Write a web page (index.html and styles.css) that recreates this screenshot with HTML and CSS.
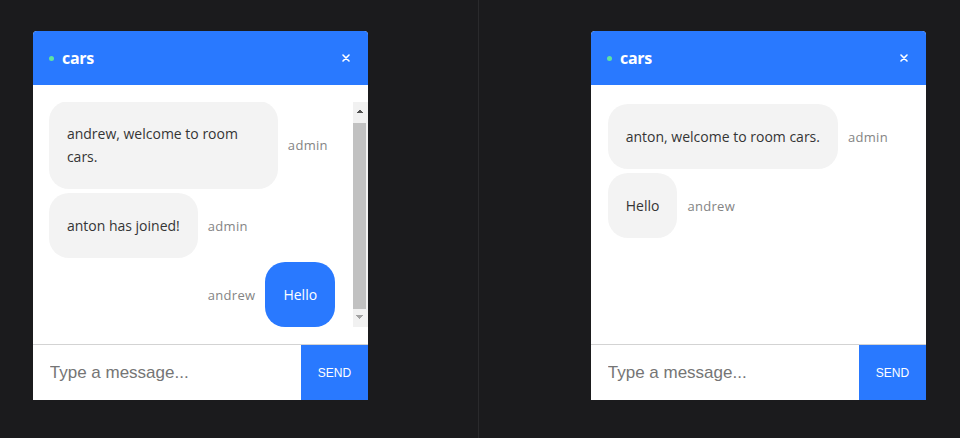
FILE: index.html
```html
<!DOCTYPE html>
<html lang="en">
<head>
<meta charset="utf-8">
<title>Chat</title>
<link rel="stylesheet" href="styles.css">
</head>
<body>
<div class="page">
  <section class="half half-left">
    <div class="chat">
      <header class="info-bar">
        <div class="room"><span class="online-dot"></span><h3 class="room-name">cars</h3></div>
        <button class="close" aria-label="Close">
          <svg width="8" height="8" viewBox="0 0 8 8"><path d="M1 1L7 7M7 1L1 7" stroke="#fff" stroke-width="1.6" stroke-linecap="round"/></svg>
        </button>
      </header>
      <div class="messages-wrap">
        <div class="messages messages-bottom">
          <div class="list">
            <div class="row">
              <div class="bubble bubble-grey"><p class="text">andrew, welcome to room cars.</p></div>
              <span class="sender sender-after">admin</span>
            </div>
            <div class="row">
              <div class="bubble bubble-grey"><p class="text">anton has joined!</p></div>
              <span class="sender sender-after">admin</span>
            </div>
            <div class="row row-mine">
              <span class="sender sender-before">andrew</span>
              <div class="bubble bubble-blue"><p class="text">Hello</p></div>
            </div>
          </div>
        </div>
        <div class="scrollbar" aria-hidden="true">
          <div class="sb-btn sb-up"></div>
          <div class="sb-track"><div class="sb-thumb"></div></div>
          <div class="sb-btn sb-down"></div>
        </div>
      </div>
      <form class="form">
        <input class="input" type="text" placeholder="Type a message...">
        <button class="send" type="button">Send</button>
      </form>
    </div>
  </section>
  <div class="divider"></div>
  <section class="half half-right">
    <div class="chat">
      <header class="info-bar">
        <div class="room"><span class="online-dot"></span><h3 class="room-name">cars</h3></div>
        <button class="close" aria-label="Close">
          <svg width="8" height="8" viewBox="0 0 8 8"><path d="M1 1L7 7M7 1L1 7" stroke="#fff" stroke-width="1.6" stroke-linecap="round"/></svg>
        </button>
      </header>
      <div class="messages-wrap">
        <div class="messages">
          <div class="list">
            <div class="row">
              <div class="bubble bubble-grey"><p class="text">anton, welcome to room cars.</p></div>
              <span class="sender sender-after">admin</span>
            </div>
            <div class="row">
              <div class="bubble bubble-grey"><p class="text">Hello</p></div>
              <span class="sender sender-after">andrew</span>
            </div>
          </div>
        </div>
      </div>
      <form class="form">
        <input class="input" type="text" placeholder="Type a message...">
        <button class="send" type="button">Send</button>
      </form>
    </div>
  </section>
</div>
</body>
</html>
```
FILE: styles.css
```css
html, body {
  margin: 0;
  padding: 0;
  background: #1b1b1d;
}
.page {
  display: flex;
  width: 960px;
  height: 438px;
  overflow: hidden;
}
.half {
  display: flex;
  align-items: flex-start;
  padding-top: 31px;
  box-sizing: border-box;
}
.half-left {
  width: 478px;
  padding-left: 33px;
}
.half-right {
  width: 481px;
  padding-left: 112px;
}
.divider {
  width: 1px;
  height: 438px;
  background: #2a2a2c;
}
.chat {
  width: 335px;
  height: 369px;
  display: flex;
  flex-direction: column;
  background: #fff;
  border-radius: 4px 4px 0 0;
  overflow: hidden;
}
.info-bar {
  height: 54px;
  flex: none;
  display: flex;
  align-items: center;
  justify-content: space-between;
  background: #2979ff;
  padding: 0 18px 0 16px;
}
.room {
  display: flex;
  align-items: center;
  gap: 8px;
}
.online-dot {
  width: 5px;
  height: 5px;
  border-radius: 50%;
  background: #5fe3a1;
  margin-top: 1px;
}
.room-name {
  margin: 0;
  font-family: "Open Sans", sans-serif;
  font-weight: 700;
  font-size: 16px;
  letter-spacing: -0.3px;
  color: #fff;
  line-height: 20px;
}
.close {
  border: none;
  background: none;
  padding: 0;
  width: 9px;
  height: 9px;
  display: flex;
  align-items: center;
  justify-content: center;
}
.messages-wrap {
  flex: 1;
  min-height: 0;
  padding: 17px 0;
  display: flex;
}
.messages {
  flex: 1;
  min-width: 0;
  overflow: hidden;
  display: flex;
  flex-direction: column;
}
.messages-bottom {
  flex-direction: column-reverse;
}
.scrollbar {
  flex: none;
  width: 15px;
  margin-left: 2px;
  display: flex;
  flex-direction: column;
  background: #f1f1f1;
}
.sb-btn {
  flex: none;
  height: 15px;
}
.sb-up {
  background:
    linear-gradient(to top left, #505050 50%, transparent 50%) 3px 7px / 4px 4px no-repeat,
    linear-gradient(to top right, #505050 50%, transparent 50%) 7px 7px / 4px 4px no-repeat;
}
.sb-down {
  background:
    linear-gradient(to bottom left, #a3a3a3 50%, transparent 50%) 3px 3px / 4px 4px no-repeat,
    linear-gradient(to bottom right, #a3a3a3 50%, transparent 50%) 7px 3px / 4px 4px no-repeat;
}
.sb-track {
  flex: 1;
  display: flex;
  flex-direction: column;
  justify-content: flex-end;
  padding: 0 2px 3px 0;
}
.sb-thumb {
  height: 186px;
  background: #c1c1c1;
}
.list {
  flex: none;
}
.row {
  display: flex;
  align-items: center;
  padding: 0 5%;
  margin-top: 4px;
}
.row:first-child {
  margin-top: 2px;
}
.row-mine {
  justify-content: flex-end;
}
.bubble {
  max-width: 80%;
  box-sizing: border-box;
  border-radius: 20px;
  padding: 21px 18px;
}
.bubble-grey {
  background: #f3f3f3;
  color: #353535;
}
.bubble-blue {
  background: #2979ff;
  color: #fff;
}
.text {
  margin: 0;
  font-family: "Open Sans", sans-serif;
  font-size: 14px;
  line-height: 23px;
  word-wrap: break-word;
}
.sender {
  font-family: "Open Sans", sans-serif;
  font-size: 13px;
  letter-spacing: 0.3px;
  color: #848484;
  white-space: nowrap;
}
.sender-after {
  padding-left: 10px;
}
.sender-before {
  padding-right: 10px;
}
.form {
  flex: none;
  display: flex;
  height: 56px;
  margin: 0;
  border-top: 1px solid #d3d3d3;
  box-sizing: border-box;
}
.input {
  width: 80%;
  border: none;
  border-radius: 0;
  outline: none;
  padding: 0 5%;
  margin: 0;
  box-sizing: border-box;
  font-family: "Liberation Sans", Arial, sans-serif;
  font-size: 17px;
  color: #333;
  background: #fff;
}
.input::placeholder {
  color: #757575;
}
.send {
  width: 20%;
  border: none;
  margin: 0;
  background: #2979ff;
  color: #fff;
  font-family: "Liberation Sans", Arial, sans-serif;
  font-size: 12px;
  text-transform: uppercase;
  padding: 0;
}
```
